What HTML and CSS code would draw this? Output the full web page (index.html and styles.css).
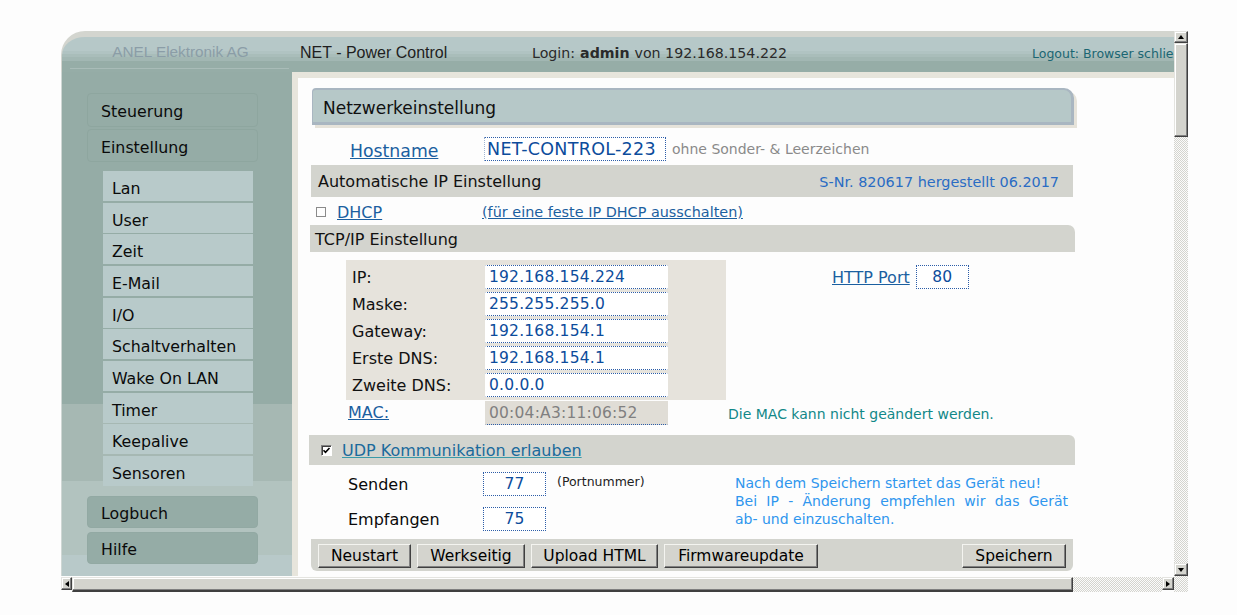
FILE: index.html
```html
<!DOCTYPE html>
<html lang="de">
<head>
<meta charset="utf-8">
<title>NET - Power Control</title>
<link rel="stylesheet" href="styles.css">
</head>
<body>
<div class="window">
  <div class="viewport">
    <header class="topbar">
      <div class="brand">ANEL Elektronik AG</div>
      <div class="product">NET - Power Control</div>
      <div class="login">Login: <b>admin</b> von 192.168.154.222</div>
      <div class="logout">Logout: Browser schließen</div>
    </header>
    <div class="main">
      <nav class="sidebar">
        <a class="nav-item">Steuerung</a>
        <a class="nav-item nav-gap">Einstellung</a>
        <div class="subnav">
          <a class="sub-item">Lan</a>
          <a class="sub-item">User</a>
          <a class="sub-item">Zeit</a>
          <a class="sub-item">E-Mail</a>
          <a class="sub-item">I/O</a>
          <a class="sub-item">Schaltverhalten</a>
          <a class="sub-item">Wake On LAN</a>
          <a class="sub-item">Timer</a>
          <a class="sub-item">Keepalive</a>
          <a class="sub-item">Sensoren</a>
        </div>
        <a class="nav-item nav-dark nav-log">Logbuch</a>
        <a class="nav-item nav-dark nav-help">Hilfe</a>
      </nav>
      <section class="content">
        <div class="form">
          <div class="page-title">Netzwerkeinstellung</div>

          <div class="host-row">
            <a class="link host-link">Hostname</a>
            <div class="input host-input">NET-CONTROL-223</div>
            <span class="note-grey">ohne Sonder- &amp; Leerzeichen</span>
          </div>

          <div class="bar bar-auto">
            <span>Automatische IP Einstellung</span>
            <span class="serial">S-Nr. 820617 hergestellt 06.2017</span>
          </div>

          <div class="dhcp-row">
            <span class="checkbox"></span>
            <a class="link dhcp-link">DHCP</a>
            <a class="link small-link">(für eine feste IP DHCP ausschalten)</a>
          </div>

          <div class="bar bar-tcp"><span>TCP/IP Einstellung</span></div>

          <div class="ip-section">
            <div class="ip-box">
              <span class="ip-label">IP:</span><div class="input ip-input">192.168.154.224</div>
              <span class="ip-label">Maske:</span><div class="input ip-input">255.255.255.0</div>
              <span class="ip-label">Gateway:</span><div class="input ip-input">192.168.154.1</div>
              <span class="ip-label">Erste DNS:</span><div class="input ip-input">192.168.154.1</div>
              <span class="ip-label">Zweite DNS:</span><div class="input ip-input">0.0.0.0</div>
            </div>
            <div class="http">
              <a class="link http-link">HTTP Port</a>
              <div class="input port-input">80</div>
            </div>
          </div>

          <div class="mac-row">
            <a class="link mac-link">MAC:</a>
            <div class="input mac-input">00:04:A3:11:06:52</div>
            <span class="mac-note">Die MAC kann nicht geändert werden.</span>
          </div>

          <div class="bar bar-udp">
            <span class="checkbox checked"><svg viewBox="0 0 9 9" width="9" height="9"><path d="M1.5 4.2 L3.5 6.3 L7.5 2" fill="none" stroke="#000" stroke-width="1.6"/></svg></span>
            <a class="link udp-link">UDP Kommunikation erlauben</a>
          </div>

          <div class="udp-section">
            <div class="udp-grid">
              <span class="udp-label">Senden</span>
              <div class="input udp-input">77</div>
              <span class="port-note">(Portnummer)</span>
              <span class="udp-label">Empfangen</span>
              <div class="input udp-input">75</div>
              <span></span>
            </div>
            <p class="restart-note">Nach dem Speichern startet das Gerät neu!<br><span class="justify">Bei IP - Änderung empfehlen wir das Gerät</span>ab- und einzuschalten.</p>
          </div>

          <div class="bar bar-buttons">
            <button class="btn btn-neustart">Neustart</button>
            <button class="btn btn-werk">Werkseitig</button>
            <button class="btn btn-upload">Upload HTML</button>
            <button class="btn btn-fw">Firmwareupdate</button>
            <button class="btn btn-save">Speichern</button>
          </div>
        </div>
      </section>
    </div>
  </div>

  <div class="vscroll">
    <div class="sb-btn raised vbtn-up"><span class="tri tri-up"></span></div>
    <div class="vthumb raised"></div>
    <div class="sb-track"></div>
    <div class="sb-btn raised vbtn-down"><span class="tri tri-down"></span></div>
  </div>
  <div class="hscroll">
    <div class="sb-btn raised hbtn-left"><span class="tri tri-left"></span></div>
    <div class="hthumb raised"></div>
    <div class="sb-track"></div>
    <div class="sb-btn raised hbtn-right"><span class="tri tri-right"></span></div>
  </div>
  <div class="corner"></div>
</div>
</body>
</html>
```

FILE: styles.css
```css
* { box-sizing: border-box; }

body {
  margin: 0;
  padding: 31px 0 0 61px;
  background: #fdfdfd;
  font-family: "DejaVu Sans", Verdana, sans-serif;
  color: #000;
}

.window {
  display: grid;
  grid-template-columns: 1113px 14px;
  grid-template-rows: 545px 16px;
  width: 1127px;
}

.viewport {
  overflow: hidden;
  display: flex;
  flex-direction: column;
  background: #fdfdfd;
}

/* ---------- top bar ---------- */
.topbar {
  flex: none;
  width: 1200px;
  height: 41px;
  display: flex;
  align-items: stretch;
  white-space: nowrap;
  border-top: 6px solid #d3d5cf;
  border-left: 1px solid #d3d5cf;
  border-radius: 24px 0 0 0;
  background: linear-gradient(to bottom,
    #b6c8c8 0 14px, #b0c3c2 14px 17px, #a9bdba 17px 20px,
    #a2b7b3 20px 24px, #96ada7 24px);
  font-family: "Liberation Sans", Arial, sans-serif;
  font-size: 15px;
}
.brand {
  width: 219px;
  margin-left: 8px;
  margin-right: 3px;
  margin-bottom: 3px;
  border-bottom: 1px solid #a9bcb8;
  display: flex;
  align-items: center;
  justify-content: center;
  padding-left: 2px;
  padding-bottom: 1px;
  font-size: 15.3px;
  color: #8b9da7;
}
.product {
  width: 240px;
  padding-left: 8px;
  display: flex;
  align-items: center;
  padding-bottom: 3px;
  font-size: 16px;
  color: #1e1e1e;
}
.login {
  width: 500px;
  display: flex;
  align-items: center;
  padding-bottom: 3px;
  font-family: "DejaVu Sans", Verdana, sans-serif;
  font-size: 14.2px;
  color: #2a2a2a;
}
.login b { margin: 0 5px; }
.logout {
  display: flex;
  align-items: center;
  padding-bottom: 3px;
  font-family: "DejaVu Sans", Verdana, sans-serif;
  font-size: 12.5px;
  color: #1b6672;
}

/* ---------- main ---------- */
.main {
  flex: 1;
  display: flex;
  min-height: 0;
}

.sidebar {
  width: 231px;
  flex: none;
  padding: 21px 0 0 25px;
  border-left: 1px solid #cfd7d4;
  background: linear-gradient(to bottom,
    #95aca6 0 332px, #a6b8b3 332px 409px,
    #b2c3bf 409px 483px, #b8c9c9 483px);
}
.nav-item {
  display: block;
  width: 171px;
  height: 34px;
  border: 1px solid #8ea69f;
  border-radius: 4px;
  padding: 3px 0 0 13px;
  line-height: 30px;
  font-size: 15.8px;
  color: #0a0a0a;
}
.nav-gap { margin-top: 2px; height: 33px; padding-top: 3px; line-height: 30px; }
.subnav {
  margin: 9px 0 0 16px;
  width: 150px;
  display: flex;
  flex-direction: column;
  gap: 1.67px;
}
.sub-item {
  display: block;
  height: 30px;
  background: #b8caca;
  padding: 4px 0 0 9px;
  line-height: 28px;
  font-size: 15.8px;
  color: #0a0a0a;
  overflow: hidden;
}
.nav-dark {
  background: #95aca6;
  border-color: #92a9a3;
  height: 32px;
  padding-top: 3px;
  line-height: 28px;
}
.nav-log { margin-top: 10px; }
.nav-help { margin-top: 4px; }

/* ---------- content ---------- */
.content {
  flex: 1;
  min-width: 0;
  border-top: 6px solid #e7e5dc;
  border-left: 6px solid #e7e5dc;
  background: #fdfdfd;
  padding: 10px 0 0 14px;
}
.form { width: 763px; }

.page-title {
  width: 762px;
  height: 37px;
  background: #b6c8c8;
  border-style: solid;
  border-color: #a9b6c1;
  border-width: 2px 3px 3px 1px;
  border-radius: 4px 10px 0 0;
  box-shadow: 3px 3px 0 #e6e3da;
  padding: 3px 0 0 10px;
  line-height: 30px;
  font-size: 17px;
  color: #101010;
}

.link {
  text-decoration: underline;
  color: #1b5fa0;
  cursor: pointer;
}

.input {
  height: 24px;
  border: 1px dotted #2c5da8;
  background: #fff;
  color: #0c4c9c;
  font-size: 15.5px;
  letter-spacing: 0.2px;
  line-height: 23px;
  padding-left: 3px;
  white-space: nowrap;
}

.host-row {
  display: flex;
  align-items: center;
  height: 28px;
  margin-top: 10px;
  padding-left: 38px;
}
.host-link { width: 134px; font-size: 17.3px; padding-top: 3px; }
.host-input { width: 182px; font-size: 17.5px; letter-spacing: 0.3px; padding-left: 2px; border-color: #2c5da8 #2c5da8 #2c5da8 #a0b4d0; }
.note-grey { color: #8a8a8a; font-size: 14px; margin-left: 6px; }

.bar {
  background: #d3d4ce;
  display: flex;
  align-items: center;
  font-size: 16px;
  color: #111;
}
.bar-auto {
  height: 32px;
  margin-top: 2px;
  width: 762px;
  margin-left: -1px;
  padding: 1px 14px 0 7px;
  justify-content: space-between;
}
.serial { color: #2a6cc4; font-size: 14.4px; }

.dhcp-row {
  height: 28px;
  display: flex;
  align-items: center;
  padding: 2px 0 0 4px;
}
.checkbox {
  width: 10px;
  height: 10px;
  border: 1px solid #8a8a8a;
  background: #fdfdfd;
  flex: none;
}
.dhcp-link { margin-left: 11px; font-size: 16px; width: 145px; }
.small-link { font-size: 14.4px; }

.bar-tcp {
  height: 27px;
  width: 765px;
  margin-left: -2px;
  padding: 2px 0 0 5px;
  border-radius: 0 7px 0 0;
}

.ip-section {
  display: flex;
  margin-top: 8px;
}
.ip-box {
  width: 380px;
  margin-left: 34px;
  background: #e6e3dc;
  padding: 5px 0 3px 6px;
  display: grid;
  grid-template-columns: 133px 183px;
  grid-auto-rows: 24px;
  row-gap: 3px;
  align-items: center;
}
.ip-label { font-size: 16px; color: #111; padding-top: 1px; }
.ip-input { border-left-color: #fff; border-right-color: #fff; }
.http {
  margin-left: 106px;
  margin-top: 5px;
  height: 24px;
  display: flex;
  align-items: center;
}
.http-link { font-size: 16px; }
.port-input { width: 53px; margin-left: 6px; text-align: center; padding: 0; }

.mac-row {
  height: 25px;
  display: flex;
  align-items: center;
  padding-left: 36px;
}
.mac-link { width: 137px; font-size: 16px; }
.mac-input {
  width: 183px;
  background: #e0ddd6;
  color: #808080;
  border-color: #e0ddd6 #e0ddd6 #2c5da8 #e0ddd6;
}
.mac-note { margin-left: 60px; color: #118888; font-size: 14px; padding-top: 2px; }

.bar-udp {
  height: 30px;
  width: 766px;
  margin-top: 10px;
  margin-left: -3px;
  padding-left: 12px;
  border-radius: 0 6px 0 0;
}
.checkbox.checked {
  width: 11px;
  height: 11px;
  border-width: 1px;
  border-style: solid;
  border-color: #808080 #fff #fff #808080;
  box-shadow: inset 1px 1px #404040;
  background: #fff;
  display: flex;
  align-items: center;
  justify-content: center;
}
.udp-link { margin-left: 10px; font-size: 16px; color: #1a6a9c; text-decoration-color: #3a9aa8; }

.udp-section {
  display: flex;
  margin-top: 7px;
}
.udp-grid {
  display: grid;
  grid-template-columns: 135px 63px auto;
  grid-auto-rows: 24px;
  row-gap: 11px;
  align-items: center;
  padding-left: 36px;
  width: 423px;
}
.udp-label { font-size: 16px; color: #0a0a0a; padding-top: 1px; }
.udp-input { text-align: center; padding: 0; }
.port-note { font-size: 12.5px; margin-left: 11px; align-self: start; padding-top: 2px; color: #222; }
.restart-note {
  margin: 2px 0 0 0;
  width: 333px;
  font-size: 14px;
  line-height: 18px;
  color: #2f96ee;
}
.justify {
  display: block;
  text-align: justify;
  text-align-last: justify;
}

.bar-buttons {
  height: 32px;
  width: 762px;
  margin-top: 8px;
  margin-left: -1px;
  padding: 0 7px;
  gap: 6px;
  border-radius: 0 0 6px 6px;
}
.btn {
  height: 24px;
  margin-top: 1px;
  padding: 1px 0 0 0;
  font-family: "DejaVu Sans", Verdana, sans-serif;
  font-size: 15.5px;
  color: #000;
  background: #d4d4ce;
  border: 1px solid;
  border-color: #f4f4f0 #404040 #404040 #f4f4f0;
  box-shadow: inset -1px -1px #808080;
}
.btn-neustart { width: 93px; }
.btn-werk { width: 108px; }
.btn-upload { width: 127px; }
.btn-fw { width: 154px; }
.btn-save { width: 104px; margin-left: auto; }

/* ---------- scrollbars ---------- */
.raised {
  background: #d4d4ce;
  border: 1px solid;
  border-color: #e4e4e0 #404040 #404040 #e4e4e0;
  box-shadow: inset -1px -1px #808080, inset 1px 1px #fff;
}
.sb-track {
  flex: 1;
  background: repeating-conic-gradient(#d4d4ce 0 25%, #fbfbfb 0 50%) 0 0 / 2px 2px;
}
.vscroll {
  display: flex;
  flex-direction: column;
}
.sb-btn {
  flex: none;
  display: flex;
  align-items: center;
  justify-content: center;
}
.vbtn-up { height: 12px; }
.vbtn-down { height: 13px; }
.vthumb { height: 94px; flex: none; }

.hscroll {
  display: flex;
  height: 16px;
  padding-top: 1px;
}
.hbtn-left { width: 11px; height: 13px; }
.hbtn-right { width: 12px; height: 13px; }
.hthumb {
  width: 1001px;
  flex: none;
  border-bottom: 2px solid #404040;
}
.hscroll .sb-track { height: 15px; }
.corner {
  background: repeating-conic-gradient(#d4d4ce 0 25%, #fbfbfb 0 50%) 0 0 / 2px 2px;
}

.tri { width: 0; height: 0; display: block; }
.tri-up { border-left: 3.5px solid transparent; border-right: 3.5px solid transparent; border-bottom: 4px solid #000; }
.tri-down { border-left: 3.5px solid transparent; border-right: 3.5px solid transparent; border-top: 4px solid #000; }
.tri-left { border-top: 3.5px solid transparent; border-bottom: 3.5px solid transparent; border-right: 4px solid #000; }
.tri-right { border-top: 3.5px solid transparent; border-bottom: 3.5px solid transparent; border-left: 4px solid #000; }
```
